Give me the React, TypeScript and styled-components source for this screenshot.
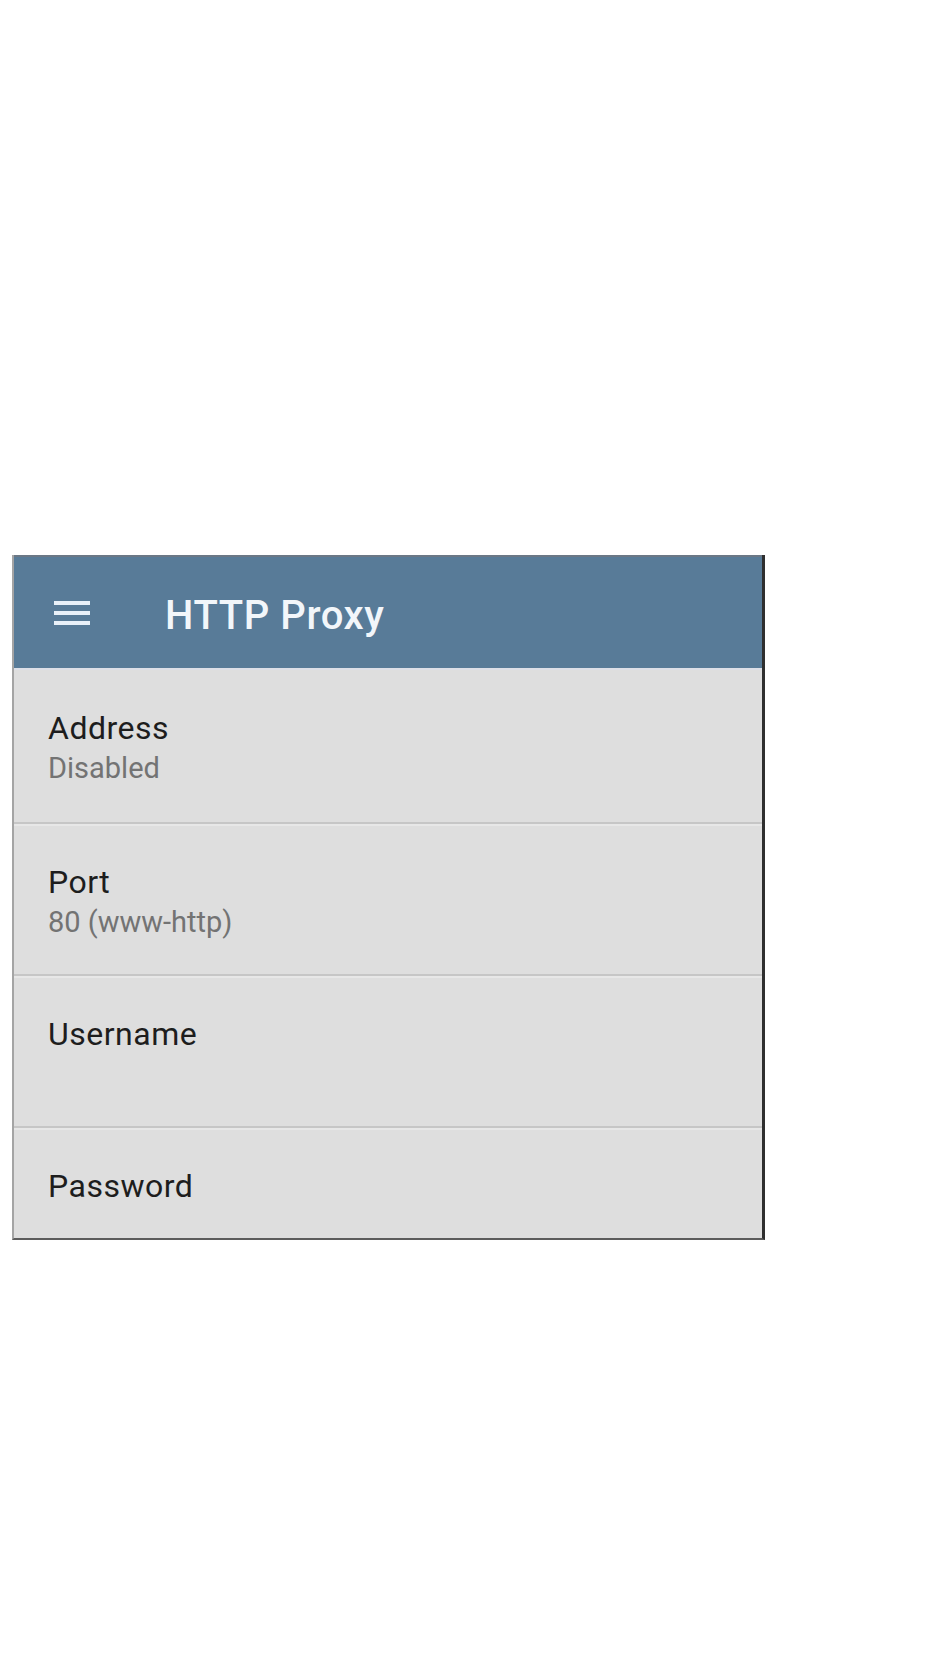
import React from 'react';
import styled, { createGlobalStyle } from 'styled-components';

const GlobalStyle = createGlobalStyle`
  html, body {
    margin: 0;
    padding: 0;
    background: #ffffff;
  }
  body {
    font-family: Roboto, "Noto Sans", "Liberation Sans", sans-serif;
  }
`;

const Page = styled.div`
  width: 950px;
  min-height: 1658px;
  padding: 555px 0 0 12px;
  box-sizing: border-box;
`;

const Panel = styled.div`
  width: 753px;
  height: 685px;
  box-sizing: border-box;
  border-left: 2px solid #a4a4a4;
  border-right: 3px solid #2f2f2f;
  border-bottom: 2px solid #5c5c5c;
  background: #dedede;
  display: flex;
  flex-direction: column;
  overflow: hidden;
`;

const Toolbar = styled.header`
  flex: 0 0 auto;
  height: 115px;
  box-sizing: border-box;
  background: #587b98;
  border-top: 2px solid #6b7886;
  border-bottom: 2px solid #dde0e8;
  display: flex;
  align-items: center;
  padding: 0 0 0 40px;
  gap: 75px;
`;

const MenuIcon = styled.svg`
  width: 36px;
  height: 25px;
  flex: 0 0 auto;
  margin-top: 2px;
`;

const Title = styled.h1`
  margin: 5px 0 0 0;
  font-size: 40px;
  font-weight: 500;
  color: #f2f6fa;
  letter-spacing: 0.6px;
`;

const Row = styled.div<{ $first?: boolean }>`
  flex: 0 0 auto;
  height: 152px;
  box-sizing: border-box;
  padding: 39px 0 0 34px;
  border-top: ${(p) => (p.$first ? 'none' : '2px solid #c6c6c6')};
  box-shadow: ${(p) => (p.$first ? 'none' : 'inset 0 2px 0 #e7e7e7')};
`;

const Label = styled.div`
  font-size: 32px;
  line-height: 38px;
  letter-spacing: 0.5px;
  color: #1d1d1d;
`;

const Value = styled.div`
  margin-top: 3px;
  font-size: 29px;
  line-height: 36px;
  color: #737373;
`;

const rows = [
  { label: 'Address', value: 'Disabled' },
  { label: 'Port', value: '80 (www-http)' },
  { label: 'Username' },
  { label: 'Password' },
];

export default function App(): JSX.Element {
  return (
    <>
      <GlobalStyle />
      <Page>
        <Panel>
          <Toolbar>
            <MenuIcon viewBox="0 0 36 25">
              <rect x="0" y="0" width="36" height="4" fill="#e9f1f9" />
              <rect x="0" y="10" width="36" height="4" fill="#e9f1f9" />
              <rect x="0" y="20" width="36" height="4" fill="#e9f1f9" />
            </MenuIcon>
            <Title>HTTP Proxy</Title>
          </Toolbar>
          {rows.map((r, i) => (
            <Row key={r.label} $first={i === 0}>
              <Label>{r.label}</Label>
              {r.value && <Value>{r.value}</Value>}
            </Row>
          ))}
        </Panel>
      </Page>
    </>
  );
}
